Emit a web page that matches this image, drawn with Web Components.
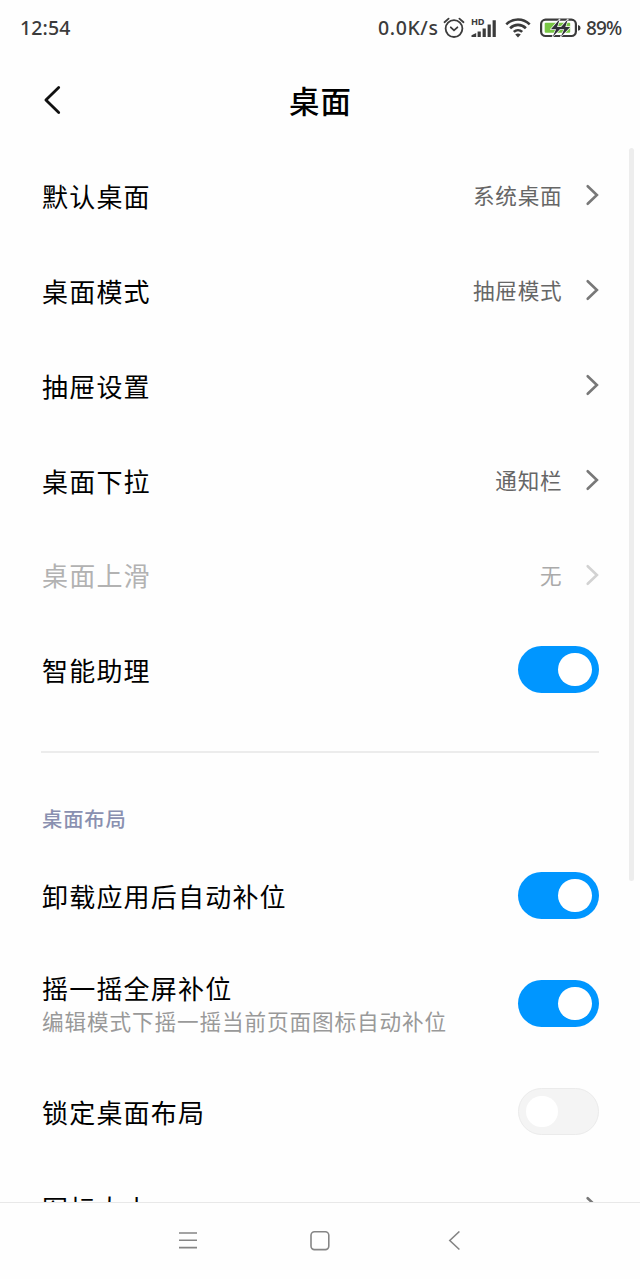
<!DOCTYPE html>
<html lang="zh-CN">
<head>
<meta charset="utf-8">
<title>桌面</title>
<style>
html,body{margin:0;height:100%;background:#fefefe;overflow:hidden}
body{font-family:"Noto Sans CJK SC",sans-serif;color:#000}
</style>
</head>
<body>
<phone-screen>
  <status-bar slot="status"></status-bar>
  <title-bar slot="title">桌面</title-bar>
  <setting-row value="系统桌面">默认桌面</setting-row>
  <setting-row value="抽屉模式">桌面模式</setting-row>
  <setting-row value="">抽屉设置</setting-row>
  <setting-row value="通知栏">桌面下拉</setting-row>
  <setting-row value="无" disabled>桌面上滑</setting-row>
  <setting-row>智能助理<toggle-switch slot="control" on></toggle-switch></setting-row>
  <section-head>桌面布局</section-head>
  <setting-row>卸载应用后自动补位<toggle-switch slot="control" on></toggle-switch></setting-row>
  <setting-row note="编辑模式下摇一摇当前页面图标自动补位">摇一摇全屏补位<toggle-switch slot="control" on></toggle-switch></setting-row>
  <setting-row>锁定桌面布局<toggle-switch slot="control"></toggle-switch></setting-row>
  <setting-row value="" style="margin-top:1px">图标大小</setting-row>
  <nav-bar slot="nav"></nav-bar>
</phone-screen>
<script>
const define = (name, render) => customElements.define(name, class extends HTMLElement {
  connectedCallback() {
    if (!this.shadowRoot) this.attachShadow({ mode: "open" }).innerHTML = render(this);
  }
});

define("phone-screen", () => `
<style>
:host{display:flex;flex-direction:column;width:640px;height:1279px;overflow:hidden;background:#fefefe}
main{position:relative;flex:1;min-height:0;overflow:hidden}
.bar{position:absolute;left:628.5px;top:0;width:5.5px;height:733px;border-radius:3px;background:#ededed}
</style>
<slot name="status"></slot><slot name="title"></slot>
<main><slot></slot><div class="bar"></div></main>
<slot name="nav"></slot>`);

define("status-bar", () => `
<style>
:host{display:flex;align-items:center;box-sizing:border-box;height:56px;padding:0 19px 0 20px;color:#3b3b3b;font:500 19.5px/28px "Noto Sans",sans-serif;white-space:nowrap}
.time{flex:1;letter-spacing:.1px}
.speed{letter-spacing:.6px;width:61px}
svg{display:block;flex:none}
.pct{width:35px;font-size:19px;letter-spacing:-.9px}
</style>
<span class="time">12:54</span><span class="speed">0.0K/s</span>
<svg style="margin-left:4px" width="22" height="24" viewBox="0 0 22 24" fill="none" stroke="#3b3b3b" stroke-width="1.8" stroke-linecap="round"><circle cx="11" cy="12.6" r="8.4"/><path d="M1.5 6.2 5.6 2.6M20.5 6.2 16.4 2.6M7.8 11.3l3.2 3 3.4-3"/></svg>
<svg style="margin-left:6px" width="27" height="24" viewBox="0 0 27 24" fill="#3b3b3b"><text x="0" y="9.2" font-family="Noto Sans" font-weight="700" font-size="9.2" textLength="13.500">HD</text><path d="M.5 21v-1.700L5.200 17v4zM6.600 15.500h3.200V21H6.600zM11.600 12.500h3.200V21h-3.200zM16.600 8.500h3.200V21h-3.200zM21.600 4.300h3.200V21h-3.200z"/></svg>
<svg style="margin-left:7px" width="26" height="24" viewBox="0 0 26 24" fill="none" stroke="#3b3b3b" stroke-width="2.6"><path d="M1.300 8.400C8 1.900 18 1.900 24.700 8.400M5.100 12.200c4.500-4.400 11.300-4.400 15.800 0M8.800 15.900c2.400-2.300 6-2.300 8.400 0"/><path d="M13 21.500 10.200 18.600Q13 16.600 15.800 18.600Z" fill="#3b3b3b" stroke="none"/></svg>
<svg style="margin-left:9px;margin-right:5px" width="41" height="24" viewBox="0 0 41 24"><rect x="1.100" y="3.600" width="34.800" height="16.400" rx="4.500" fill="#fefefe" stroke="#3b3b3b" stroke-width="2.200"/><rect x="4.700" y="6.800" width="25.500" height="10" rx="1" fill="#79c645"/><path d="M38 9v5.800q2.600-.6 2.600-2.900T38 9z" fill="#3b3b3b"/><path d="m19.700 3.300-8.800 10h5.200l-3.600 7.600 9.500-9.900h-4.900zM27.900 3.300l-8.800 10h5.200l-3.600 7.600 9.500-9.900h-4.900z" fill="#303038" stroke="#fefefe" stroke-width="1.300" stroke-linejoin="round" paint-order="stroke"/></svg>
<span class="pct">89%</span>`);

define("title-bar", () => `
<style>
:host{display:grid;grid-template-columns:42px 1fr 42px;align-items:center;box-sizing:border-box;height:92px;padding:0 0 4px;font-size:30.400px;line-height:44px;font-weight:500;text-align:center;letter-spacing:1px}
svg{display:block}
span{padding-left:1px}
</style>
<svg width="64" height="30" viewBox="0 0 64 30" fill="none" stroke="#111" stroke-width="2.800" stroke-linecap="round" stroke-linejoin="round"><path d="M58.700 2.500 45.900 15.100l12.800 12.500"/></svg>
<span><slot></slot></span>`);

define("setting-row", el => `
<style>
:host{display:flex;align-items:center;box-sizing:border-box;height:${el.hasAttribute("note") ? 121.4 : 94.8}px;padding:0 41.500px 0 42px;font-size:26px;line-height:34px;letter-spacing:1.200px;white-space:nowrap}
:host([disabled]){color:#b2b2b2}
.text{flex:1;display:flex;flex-direction:column;padding-top:1.500px}
.note{font-size:21.600px;line-height:32px;letter-spacing:.900px;color:#999}
.value{font-size:21.600px;letter-spacing:.800px;color:#666;margin-right:22px}
:host([disabled]) .value{color:#aaa}
svg{display:block;stroke:#787878}
:host([disabled]) svg{stroke:#d2d2d2}
</style>
<span class="text"><span><slot></slot></span>${el.hasAttribute("note") ? `<span class="note">${el.getAttribute("note")}</span>` : ""}</span>
${el.hasAttribute("value") ? `<span class="value">${el.getAttribute("value")}</span><svg width="14" height="22" viewBox="0 0 14 22" fill="none" stroke-width="2.600" stroke-linecap="round" stroke-linejoin="miter"><path d="m2.700 2.200 9.200 8.800-9.200 8.800"/></svg>` : ""}
<slot name="control"></slot>`);

define("toggle-switch", () => `
<style>
:host{display:flex;align-items:center;box-sizing:border-box;width:81px;height:47.500px;border-radius:24px;padding:0 7.500px;background:#f4f4f4;border:1px solid #ebebeb}
i{display:block;width:31.500px;height:31.500px;border-radius:50%;background:#fff}
:host([on]){width:80.500px;height:47px;background:#0096ff;border:0;padding:0 6.700px;justify-content:flex-end}
:host([on]) i{width:33.500px;height:33.500px}
</style><i></i>`);

define("section-head", () => `
<style>
:host{display:flex;flex-direction:column;box-sizing:border-box;height:131.300px;padding:34.700px 41px 0;font-size:20.300px;font-weight:500;line-height:30px;letter-spacing:.900px;color:#8a90b0}
hr{border:0;height:1.500px;width:100%;margin:0 0 50.300px;background:#ececec}
span{padding-left:1px}
</style><hr><span><slot></slot></span>`);

define("nav-bar", () => `
<style>
:host{display:grid;grid-template-columns:20px 20px 20px;gap:112px;justify-content:center;align-items:center;box-sizing:border-box;height:77px;border-top:1px solid #e8e8e8;background:#fefefe}
svg{display:block;fill:none;stroke:#858585;stroke-width:1.600}
</style>
<svg width="20" height="20" viewBox="0 0 20 20"><path d="M1 2h18M1 9.300h18M1 16.600h18"/></svg>
<svg width="20" height="20" viewBox="0 0 20 20"><rect x="1" y=".800" width="17.800" height="17.800" rx="3.500"/></svg>
<svg width="20" height="20" viewBox="0 0 20 20"><path d="M17.400.5 7.800 9.500l9.600 9"/></svg>`);
</script>
</body>
</html>
